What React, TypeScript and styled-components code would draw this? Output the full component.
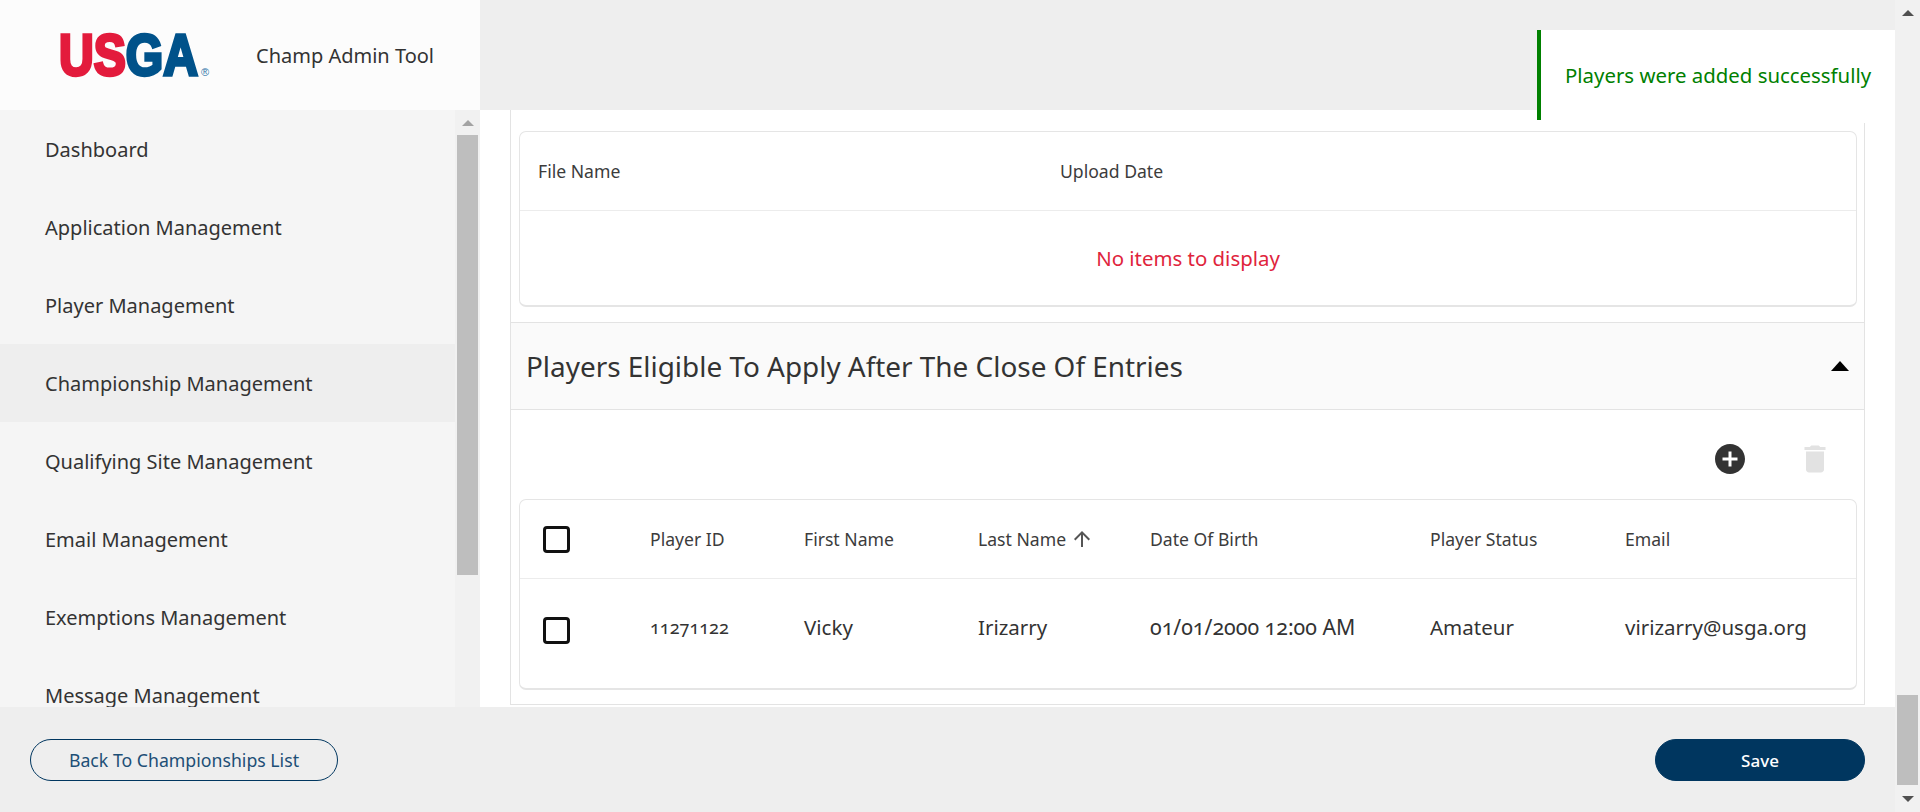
import React from "react";
import styled, { createGlobalStyle } from "styled-components";

const FONT = `"Noto Sans", "Open Sans", Arial, sans-serif`;

const Global = createGlobalStyle`
  html, body { margin: 0; padding: 0; height: 100%; overflow: hidden; background: #eeeeee; }
  * { box-sizing: border-box; }
  body { font-family: ${FONT}; color: #333; }
`;

const Page = styled.div`
  position: relative;
  width: 1920px;
  height: 812px;
  display: flex;
  background: #eeeeee;
`;
const Shell = styled.div`
  flex: 1;
  display: flex;
  flex-direction: column;
  min-width: 0;
`;
const Top = styled.div`
  height: 707px;
  display: flex;
  overflow: hidden;
`;
const Left = styled.aside`
  width: 480px;
  display: flex;
  flex-direction: column;
`;
const Brand = styled.div`
  height: 110px;
  background: #fcfcfc;
  display: flex;
  align-items: center;
  padding-left: 58px;
  gap: 44px;
`;
const Logo = styled.svg`
  width: 154px;
  height: 70px;
  flex: none;
`;
const AppName = styled.span`
  font-size: 20px;
  color: #333;
`;
const SideBody = styled.div`
  height: 597px;
  display: flex;
  background: #f1f1f1;
`;
const Nav = styled.nav`
  width: 455px;
  background: #f5f5f5;
  overflow: hidden;
`;
const NavItem = styled.div<{ $active?: boolean }>`
  height: 78px;
  padding: 1px 0 0 45px;
  display: flex;
  align-items: center;
  font-size: 20px;
  color: #333;
  background: ${(p) => (p.$active ? "#eeeeee" : "transparent")};
`;
const Rail = styled.div<{ $w: number }>`
  width: ${(p) => p.$w}px;
  display: flex;
  flex-direction: column;
  align-items: center;
  background: #f1f1f1;
`;
const RailEnd = styled.div<{ $h: number }>`
  height: ${(p) => p.$h}px;
  display: flex;
  align-items: center;
  justify-content: center;
  flex: none;
`;
const Thumb = styled.div<{ $h: number; $mt?: number }>`
  width: 21px;
  height: ${(p) => p.$h}px;
  margin-top: ${(p) => p.$mt ?? 0}px;
  background: #bebebe;
  flex: none;
`;
const Grow = styled.div`
  flex: 1;
`;
const Arrow = styled.svg`
  width: 12px;
  height: 6px;
`;
const MainCol = styled.main`
  width: 1415px;
  display: flex;
  flex-direction: column;
`;
const Strip = styled.div`
  height: 110px;
  flex: none;
`;
const Content = styled.div`
  height: 597px;
  background: #fff;
  padding: 0 30px 2px;
  overflow: hidden;
`;
const Panel = styled.section`
  height: 595px;
  border-left: 1px solid #e3e3e3;
  border-right: 1px solid #e3e3e3;
  border-bottom: 1px solid #e3e3e3;
  padding-top: 21px;
`;
const Card = styled.div<{ $h: number }>`
  height: ${(p) => p.$h}px;
  margin: 0 7px 0 8px;
  border: 1px solid #e5e5e5;
  border-bottom-width: 2px;
  border-radius: 7px;
  background: #fff;
`;
const Row = styled.div<{ $cols: string; $h: number; $line?: boolean }>`
  display: grid;
  grid-template-columns: ${(p) => p.$cols};
  height: ${(p) => p.$h}px;
  align-items: center;
  border-bottom: ${(p) => (p.$line ? "1px solid #ececec" : "none")};
`;
const Head = styled.div<{ $pl?: number }>`
  font-size: 17.6px;
  color: #3c3c3c;
  display: flex;
  align-items: center;
  gap: 4px;
  padding-left: ${(p) => p.$pl ?? 0}px;
  white-space: nowrap;
`;
const SortIcon = styled.svg`
  width: 24px;
  height: 24px;
  fill: #555;
  flex: none;
`;
const Cell = styled.div<{ $size?: number }>`
  font-size: ${(p) => p.$size ?? 20.5}px;
  color: #333;
  white-space: nowrap;
  font-variant-numeric: oldstyle-nums;
`;
const Empty = styled.div`
  height: 94px;
  display: flex;
  align-items: center;
  justify-content: center;
  font-size: 20.4px;
  color: #e0243c;
`;
const AccHead = styled.div`
  height: 88px;
  margin-top: 15px;
  background: #fafafa;
  border-top: 1px solid #e3e3e3;
  border-bottom: 1px solid #e3e3e3;
  display: flex;
  align-items: center;
  justify-content: space-between;
  padding: 0 15px 0 15px;
`;
const Title = styled.h2`
  margin: 0;
  font-size: 27.9px;
  font-weight: 400;
  color: #333;
`;
const Caret = styled.svg`
  width: 18px;
  height: 10px;
`;
const Tools = styled.div`
  height: 89px;
  display: flex;
  align-items: center;
  justify-content: flex-end;
  padding: 9px 31px 0 0;
  gap: 49px;
`;
const IconBox = styled.svg<{ $c: string }>`
  width: 36px;
  height: 36px;
  fill: ${(p) => p.$c};
  flex: none;
`;
const Check = styled.span<{ $mt?: number }>`
  display: block;
  width: 27px;
  height: 27px;
  margin: ${(p) => p.$mt ?? 0}px 0 0 23px;
  border: 3px solid #111;
  border-radius: 4px;
  background: #fff;
`;
const Footer = styled.footer`
  height: 105px;
  display: flex;
  align-items: center;
  justify-content: space-between;
  padding: 1px 30px 0;
`;
const Pill = styled.button<{ $solid?: boolean }>`
  height: 42px;
  width: ${(p) => (p.$solid ? 210 : 308)}px;
  border-radius: 21px;
  border: 1px solid #00365f;
  font-family: ${FONT};
  font-size: ${(p) => (p.$solid ? 17 : 17.7)}px;
  font-weight: ${(p) => (p.$solid ? 500 : 400)};
  background: ${(p) => (p.$solid ? "#00365f" : "transparent")};
  color: ${(p) => (p.$solid ? "#fff" : "#1d4f76")};
`;
const Toast = styled.div`
  position: absolute;
  top: 30px;
  left: 1537px;
  width: 358px;
  height: 90px;
  background: #fff;
  border-left: 4px solid #008000;
  box-shadow: 0 3px 0 #fff;
  display: flex;
  align-items: center;
  padding-left: 24px;
  font-size: 20.4px;
  color: #008000;
`;

const Up = ({ c }: { c: string }) => (
  <Arrow viewBox="0 0 12 6"><polygon points="6,0 12,6 0,6" fill={c} /></Arrow>
);
const Down = ({ c }: { c: string }) => (
  <Arrow viewBox="0 0 12 6"><polygon points="0,0 12,0 6,6" fill={c} /></Arrow>
);

const NAV = [
  "Dashboard",
  "Application Management",
  "Player Management",
  "Championship Management",
  "Qualifying Site Management",
  "Email Management",
  "Exemptions Management",
  "Message Management",
];
const PLAYER_COLS = "130px 154px 174px 172px 280px 195px 1fr";

export default function App() {
  return (
    <Page>
      <Global />
      <Shell>
        <Top>
          <Left>
            <Brand>
              <Logo viewBox="0 0 154 70">
                <text x="1" y="54.5" fontFamily="Liberation Sans" fontWeight="700" fontSize="58" textLength="139" lengthAdjust="spacingAndGlyphs" strokeWidth="3.4">
                  <tspan fill="#e31b3c" stroke="#e31b3c">US</tspan>
                  <tspan fill="#00528a" stroke="#00528a">GA</tspan>
                </text>
                <text x="143" y="56" fontFamily="Liberation Sans" fontSize="11" fill="#2f74a8">®</text>
              </Logo>
              <AppName>Champ Admin Tool</AppName>
            </Brand>
            <SideBody>
              <Nav>
                {NAV.map((n) => (
                  <NavItem key={n} $active={n === "Championship Management"}>{n}</NavItem>
                ))}
              </Nav>
              <Rail $w={25}>
                <RailEnd $h={25}><Up c="#a3a3a3" /></RailEnd>
                <Thumb $h={440} />
              </Rail>
            </SideBody>
          </Left>
          <MainCol>
            <Strip />
            <Content>
              <Panel>
                <Card $h={176}>
                  <Row $cols="533px 1fr" $h={79} $line>
                    <Head $pl={18}>File Name</Head>
                    <Head $pl={7}>Upload Date</Head>
                  </Row>
                  <Empty>No items to display</Empty>
                </Card>
                <AccHead>
                  <Title>Players Eligible To Apply After The Close Of Entries</Title>
                  <Caret viewBox="0 0 18 10"><polygon points="9,0 18,10 0,10" fill="#000" /></Caret>
                </AccHead>
                <Tools>
                  <IconBox $c="#333" viewBox="0 0 24 24">
                    <path d="M12 2C6.48 2 2 6.48 2 12s4.48 10 10 10 10-4.48 10-10S17.52 2 12 2zm5 11h-4v4h-2v-4H7v-2h4V7h2v4h4v2z" />
                  </IconBox>
                  <IconBox $c="#e2e2e2" viewBox="0 0 24 24">
                    <path d="M6 19c0 1.1.9 2 2 2h8c1.1 0 2-.9 2-2V7H6v12zM19 4h-3.5l-1-1h-5l-1 1H5v2h14V4z" />
                  </IconBox>
                </Tools>
                <Card $h={191}>
                  <Row $cols={PLAYER_COLS} $h={79} $line>
                    <Check />
                    <Head>Player ID</Head>
                    <Head>First Name</Head>
                    <Head>
                      Last Name
                      <SortIcon viewBox="0 0 24 24">
                        <path d="M4 12l1.41 1.41L11 7.83V20h2V7.83l5.58 5.59L20 12l-8-8-8 8z" />
                      </SortIcon>
                    </Head>
                    <Head>Date Of Birth</Head>
                    <Head>Player Status</Head>
                    <Head>Email</Head>
                  </Row>
                  <Row $cols={PLAYER_COLS} $h={95}>
                    <Check $mt={8} />
                    <Cell $size={18}>11271122</Cell>
                    <Cell>Vicky</Cell>
                    <Cell>Irizarry</Cell>
                    <Cell $size={21.3}>01/01/2000 12:00 AM</Cell>
                    <Cell>Amateur</Cell>
                    <Cell>virizarry@usga.org</Cell>
                  </Row>
                </Card>
              </Panel>
            </Content>
          </MainCol>
        </Top>
        <Footer>
          <Pill>Back To Championships List</Pill>
          <Pill $solid>Save</Pill>
        </Footer>
      </Shell>
      <Rail $w={25}>
        <RailEnd $h={25}><Up c="#505050" /></RailEnd>
        <Thumb $h={90} $mt={670} />
        <Grow />
        <RailEnd $h={27}><Down c="#505050" /></RailEnd>
      </Rail>
      <Toast>Players were added successfully</Toast>
    </Page>
  );
}
